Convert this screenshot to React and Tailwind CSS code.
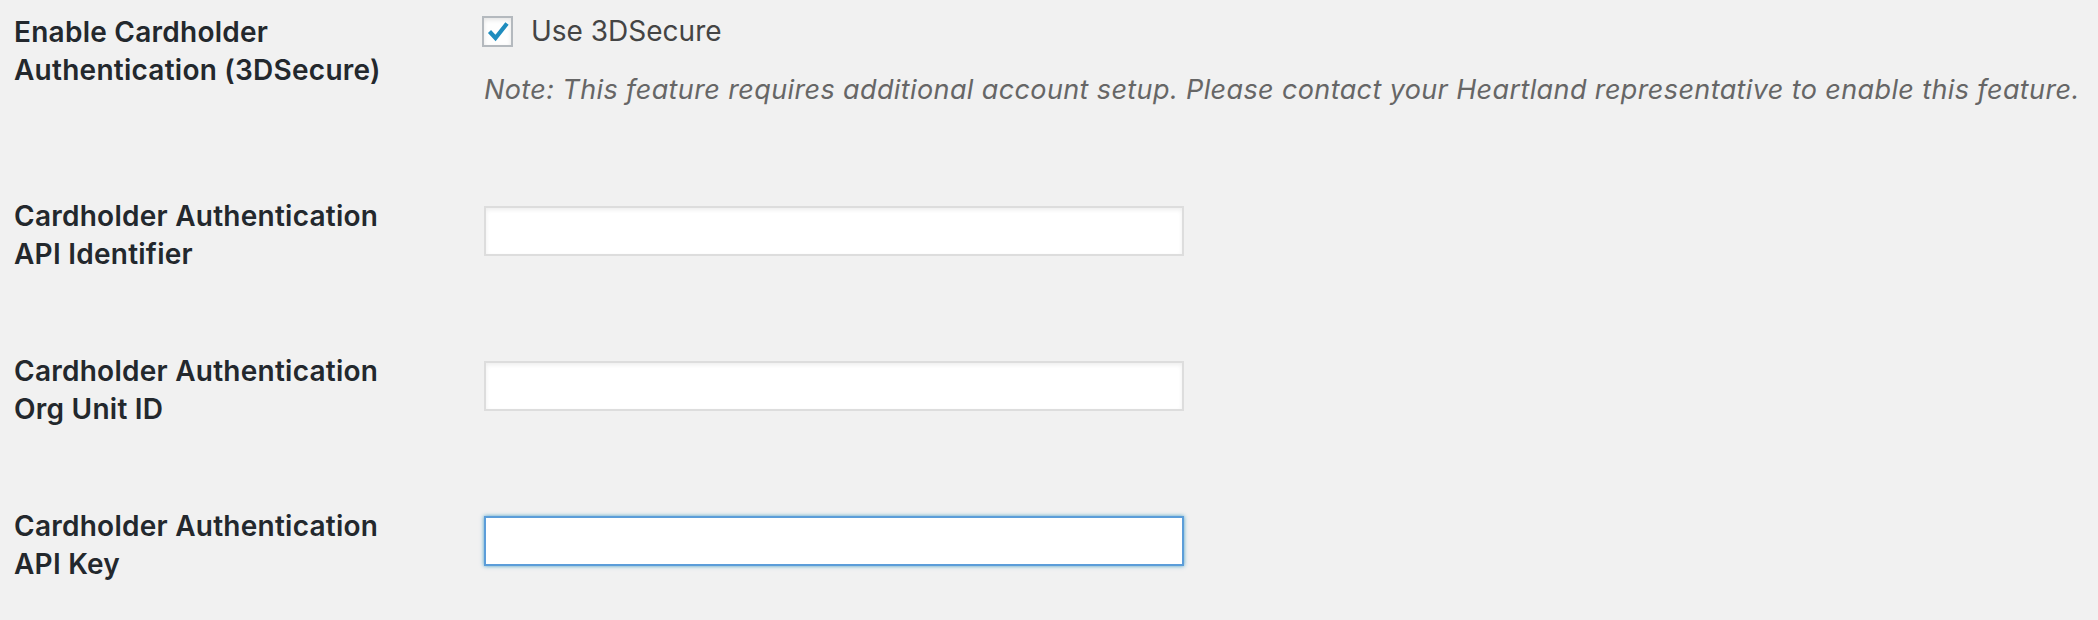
import React from 'react';

const rows = [
    { label: ['Cardholder Authentication', 'API Identifier'], focused: false },
    { label: ['Cardholder Authentication', 'Org Unit ID'], focused: false },
    { label: ['Cardholder Authentication', 'API Key'], focused: true },
];

function Label({ lines }) {
    return (
        <div className="w-[482px] shrink-0 pl-[14px] text-[28px] leading-[38px] font-semibold tracking-[0.25px] text-[#23282d]">
            {lines.map((l) => (
                <div key={l}>{l}</div>
            ))}
        </div>
    );
}

export default function App() {
    return (
        <div
            className="h-[620px] w-[2098px] overflow-hidden bg-[#f1f1f1]"
            style={{ fontFamily: 'Inter, "Noto Sans", sans-serif' }}
        >
            {/* 3DSecure toggle */}
            <div className="flex h-[197px] items-start">
                <div className="pt-[13px]">
                    <Label lines={['Enable Cardholder', 'Authentication (3DSecure)']} />
                </div>
                <div className="pt-[12px]">
                    <label className="flex items-center gap-[18px] text-[28px] leading-[38px] text-[#444]">
                        <span className="flex h-[31px] w-[31px] items-center justify-center border-2 border-[#b4b9be] bg-[#fefefe] shadow-[inset_0_2px_4px_rgba(0,0,0,0.1)]">
                            <svg width="24" height="24" viewBox="0 0 24 24">
                                <path d="M3.5 12.5 L9.5 19 L21 4.5" fill="none" stroke="#1e8cbe" strokeWidth="4.2" strokeLinejoin="miter" />
                            </svg>
                        </span>
                        Use 3DSecure
                    </label>
                    <p className="mt-[22px] ml-[2px] whitespace-nowrap text-[27px] leading-[36px] italic tracking-[0.38px] text-[#666]">
                        Note: This feature requires additional account setup. Please contact your Heartland representative to enable this feature.
                    </p>
                </div>
            </div>

            {rows.map((row) => (
                <div key={row.label[1]} className="flex h-[155px] items-start">
                    <Label lines={row.label} />
                    <div className="pt-[9px]">
                        <input
                            type="text"
                            className={
                                row.focused
                                    ? 'ml-[2px] block h-[50px] w-[700px] border-2 border-[#5b9dd9] bg-white shadow-[0_0_4px_rgba(30,140,190,0.8)] outline-none'
                                    : 'ml-[2px] block h-[50px] w-[700px] border-2 border-[#ddd] bg-white shadow-[inset_0_2px_4px_rgba(0,0,0,0.07)] outline-none'
                            }
                        />
                    </div>
                </div>
            ))}
        </div>
    );
}
